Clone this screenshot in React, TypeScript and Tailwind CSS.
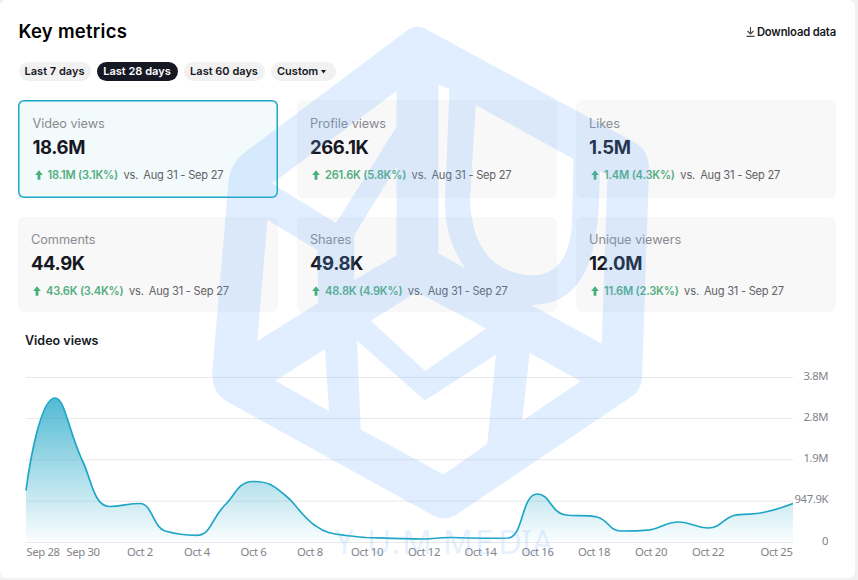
import React from "react";

type Metric = {
  label: string;
  value: string;
  delta: string;
  active?: boolean;
};

const topRow: Metric[] = [
  { label: "Video views", value: "18.6M", delta: "18.1M (3.1K%)", active: true },
  { label: "Profile views", value: "266.1K", delta: "261.6K (5.8K%)" },
  { label: "Likes", value: "1.5M", delta: "1.4M (4.3K%)" },
];

const bottomRow: Metric[] = [
  { label: "Comments", value: "44.9K", delta: "43.6K (3.4K%)" },
  { label: "Shares", value: "49.8K", delta: "48.8K (4.9K%)" },
  { label: "Unique viewers", value: "12.0M", delta: "11.6M (2.3K%)" },
];

function MetricCard({ metric, short }: { metric: Metric; short?: boolean }) {
  const frame = metric.active
    ? "bg-[#f2fafc] pl-[14.5px] pt-4 shadow-[inset_0_0_0_1.5px_#1ba6c5]"
    : short
      ? "bg-[#f8f8f8] pl-[13px] pt-[15px]"
      : "bg-[#f8f8f8] pl-[13px] pt-4";
  return (
    <div className={`h-full w-[260px] rounded-md ${frame}`}>
      <div className="h-4 text-[12.75px] leading-4 tracking-[-0.07px] text-[#8a8b91]">{metric.label}</div>
      <div className="mt-[3px] h-6 text-[18.5px] font-bold leading-6 tracking-[-0.4px] text-[#161823]">{metric.value}</div>
      <div className="mt-2 flex h-4 items-center whitespace-pre text-[11.1px] leading-4">
        <svg viewBox="0 0 8 10" className="ml-[2px] mr-[5px] h-[10px] w-2" fill="#45b07c">
          <path d="M4 0.3 7.800 4.900H5.400V9.700H2.600V4.900H0.200Z" />
        </svg>
        <span className="font-semibold tracking-[-0.2px] text-[#54ad7f]">{metric.delta}</span>
        <span className="ml-[5.5px] tracking-[-0.15px] text-[#606166]">vs.</span>
        <span className="ml-[5px] tracking-[-0.23px] text-[#606166]">Aug 31 - Sep 27</span>
      </div>
    </div>
  );
}

const gridLines = [377.5, 418.5, 459.8, 501.2, 542.5];
const curve =
  "M26 490.5C30 460 41 398 55 398C65 398 68 430 82.5 461C91 478 94 506.5 109 506.5C122 506.5 128 503.5 140 503.5C152 503.5 153 527 165 531C172 533 182 535.3 196.5 535.3C211 535.3 211 519 225 505C235 495.500 238 481.500 253 481.500C268 481.500 273 484 290 499.500C299 509 303 517 315 525.500C324 532 326 534 366 537.500C382 538 400 539 424 539C436 539 437 537.300 452 537.500C468 538.300 485 538.500 508 538C524 537 521 494 537.500 494C550 494 551 513.500 566 515C575 516.500 586 514.500 597 517C609 520 609 531 621 531C633 531 640 530.800 650 529.800C662 528 665 522 679 522C690 522 697 528 708 528C722 528 724 516 737 514.800C750 513.800 762 515.500 793 503.500";

const amounts: [string, number][] = [
  ["3.8M", 380], ["2.8M", 421], ["1.9M", 462], ["947.9K", 503], ["0", 544.5],
];

const dates: [string, number][] = [
  ["Sep 28", 43], ["Sep 30", 83], ["Oct 2", 140], ["Oct 4", 197], ["Oct 6", 253.5],
  ["Oct 8", 310], ["Oct 10", 367], ["Oct 12", 424], ["Oct 14", 480.5], ["Oct 16", 537.5],
  ["Oct 18", 594], ["Oct 20", 651], ["Oct 22", 708], ["Oct 25", 776.5],
];

function VideoViewsChart() {
  return (
    <svg viewBox="0 360 858 206" className="block h-[206px] w-[858px]" fill="none">
      <defs>
        <linearGradient id="area" x1="0" y1="397" x2="0" y2="543" gradientUnits="userSpaceOnUse">
          <stop offset="0" stopColor="#1fa6c6" stopOpacity="0.78" />
          <stop offset="1" stopColor="#1fa6c6" stopOpacity="0.01" />
        </linearGradient>
      </defs>
      {gridLines.map((y) => (
        <path key={y} d={`M26 ${y}H793`} stroke="#e9e9ea" />
      ))}
      <path d={`${curve}V542H26Z`} fill="url(#area)" />
      <path d={curve} stroke="#1fa6c6" strokeWidth="1.7" />
      <g fill="#828389" fontSize="11.3" letterSpacing="-0.35" fontFamily="Noto Sans, sans-serif">
        {amounts.map(([label, y]) => (
          <text key={label} x="828.200" y={y} textAnchor="end">{label}</text>
        ))}
        {dates.map(([label, x]) => (
          <text key={label} x={x} y="556" textAnchor="middle">{label}</text>
        ))}
      </g>
    </svg>
  );
}

const cubeLogo = [
  "M409 29Q417 24.500 424 28L634 142Q649 150 649 170L642 378Q641 391 631 397L455 515.500Q444 521 434 516L228 402Q212 394 212.300 372L228.500 182Q230 164 244 153Z",
  "M272 183.500 396.500 91V127L336 223Z",
  "M396.500 166.500V255.500L354.300 280V235Z",
  "M267.500 220 317.300 250 318.300 303 257.300 341Z",
  "M438.500 84.500 449.500 89 445 200Q444 238 465 268L438.500 253.500Z",
  "M475.700 105 573.500 159 572.300 210Q573 275 532 275.500Q473 272 470 200Z",
  "M600 171 607.500 175 601.700 343.500 530.700 304.700C580 306 597 262 599 200Z",
  "M370.700 320.700 417 292 486 328.500 425.300 371Z",
  "M357 340.500 424.800 400.500 496 354.500 487.300 444 443.500 474.500 360.700 429.500Z",
  "M325 349 329 411 275.300 380.700Z",
  "M529.700 353 580.700 381.300 522 421Z",
].join("");

function Watermark() {
  return (
    <svg viewBox="0 0 858 580" className="pointer-events-none absolute inset-0 h-[580px] w-[858px]" fill="#64aaff" fillOpacity="0.2">
      <path d={cubeLogo} fillRule="evenodd" />
      <text x="335 367 391 402 433 443 475 498 521 532" y="554" fontSize="33" fillOpacity="0.18" fontFamily="Noto Sans, sans-serif">YU.M MEDIA</text>
    </svg>
  );
}

export default function App() {
  return (
    <div className="relative h-[580px] w-[858px] overflow-hidden bg-[#f1f1f2] font-['Inter','Liberation_Sans',sans-serif]">
      <main className="h-[578px] w-[855px] overflow-hidden rounded-md bg-white">
        <header className="flex h-[62px] items-center justify-between pl-[18.5px] pr-[19px]">
          <h1 className="text-[18.5px] font-semibold leading-6 tracking-[0.25px] text-black">Key metrics</h1>
          <button className="flex items-center gap-[2px] pt-[2px] text-[11.25px] font-semibold tracking-[-0.17px] text-[#161823]">
            <svg viewBox="0 0 9 10" className="h-[10px] w-[9px]" fill="none" stroke="#44454d" strokeWidth="1.1">
              <path d="M4.500 0V7M1.500 4 4.500 7 7.500 4M0.500 9.400H8.500" />
            </svg>
            Download data
          </button>
        </header>
        <nav className="flex h-[19px] gap-[6px] pl-[18.5px] text-[11px] font-semibold text-[#161823]">
          <button className="w-[72px] rounded-full bg-[#f1f1f1]">Last 7 days</button>
          <button className="w-[81px] rounded-full bg-[#161823] text-white">Last 28 days</button>
          <button className="w-[81px] rounded-full bg-[#f1f1f1]">Last 60 days</button>
          <button className="flex w-[65px] items-center rounded-full bg-[#f1f1f1] pl-[6.5px]">
            Custom
            <svg viewBox="0 0 5 4" className="ml-[3px] h-1 w-[5px]" fill="#161823"><path d="M0 0H5L2.500 3.500Z" /></svg>
          </button>
        </nav>
        <section className="mt-[19px] flex h-[98px] gap-[19px] pl-[18px]">
          {topRow.map((m) => <MetricCard key={m.label} metric={m} />)}
        </section>
        <section className="mt-[19px] flex h-[95px] gap-[19px] pl-[18px]">
          {bottomRow.map((m) => <MetricCard key={m.label} metric={m} short />)}
        </section>
        <h2 className="mt-5 h-[28px] pl-[25px] text-[12.500px] font-semibold leading-[18px] text-[#161823]">Video views</h2>
        <VideoViewsChart />
      </main>
      <Watermark />
    </div>
  );
}
